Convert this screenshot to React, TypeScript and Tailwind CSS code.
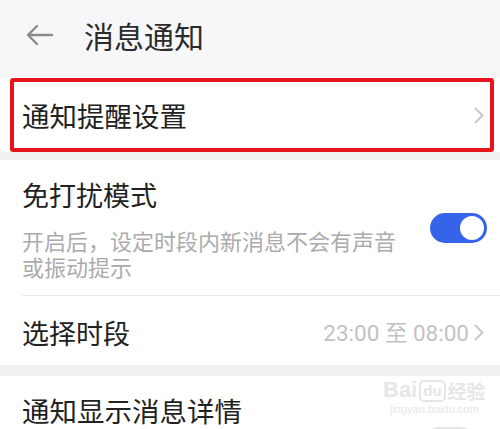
import React from 'react';

const font = { fontFamily: '"Noto Sans CJK SC", "Noto Sans", sans-serif' };

const Chevron: React.FC<{ className?: string }> = ({ className }) => (
  <svg width="10" height="17" viewBox="0 0 10 17" className={className}>
    <path d="M1.5 1.5 L8.5 8.5 L1.5 15.5" fill="none" stroke="#c6c6c8" strokeWidth="1.8" strokeLinecap="round" strokeLinejoin="round" />
  </svg>
);

const Toggle: React.FC<{ on: boolean }> = ({ on }) =>
  on ? (
    <div className="w-[57px] h-[30px] rounded-full bg-[#3563ea] flex items-center justify-end pr-[1px]">
      <div className="w-[28px] h-[28px] rounded-full bg-white border-[2px] border-[#3563ea]" />
    </div>
  ) : (
    <div className="w-[50px] h-[28px] rounded-full bg-[#e4e4e6] flex items-center pl-[2px]">
      <div className="w-[24px] h-[24px] rounded-full bg-white" />
    </div>
  );

export default function App() {
  return (
    <div className="relative w-[500px] h-[429px] overflow-hidden bg-[#f1f1f3]" style={font}>
      {/* header */}
      <div className="h-[72px] bg-[#f7f7f9] flex items-center">
        <svg width="30" height="24" viewBox="0 0 30 24" className="ml-[25px] -mt-[2px]">
          <path d="M27 12 H3 M12 3 L3 12 L12 21" fill="none" stroke="#8a8a8c" strokeWidth="2.4" strokeLinecap="round" strokeLinejoin="round" />
        </svg>
        <span className="ml-[29px] -mt-[2px] text-[30px] leading-[36px] text-[#2b2b2b]">消息通知</span>
      </div>
      <div className="h-[6px] bg-[#f7f7f9]" />

      {/* highlighted row */}
      <div className="bg-white">
        <div className="ml-[10px] mr-[6px] h-[74px] border-[4px] border-[#e8141c] rounded-[3px] flex items-center justify-between pl-[8px] pr-[6px]">
          <span className="text-[27.5px] leading-[36px] text-[#222]">通知提醒设置</span>
          <Chevron />
        </div>
      </div>

      <div className="h-[8px]" />

      {/* do not disturb */}
      <div className="bg-white">
        <div className="flex items-center justify-between pl-[22px] pr-[13px] pt-[17px] pb-[16px]">
          <div>
            <div className="text-[27px] leading-[36px] text-[#222]">免打扰模式</div>
            <div className="mt-[14px] w-[380px] text-[22px] leading-[26px] text-[#ababad]">
              开启后，设定时段内新消息不会有声音或振动提示
            </div>
          </div>
          <Toggle on />
        </div>
        <div className="ml-[22px] h-px bg-[#ececee]" />
        <div className="h-[69px] flex items-center justify-between pl-[22px] pr-[16px]">
          <span className="mt-[4px] text-[27px] leading-[36px] text-[#222]">选择时段</span>
          <div className="mt-[4px] flex items-center gap-[5px]">
            <span className="text-[22.5px] leading-[30px] text-[#c2c2c4]" style={{ fontFamily: 'Roboto, "Noto Sans CJK SC", sans-serif' }}>
              23:00 至 08:00
            </span>
            <Chevron />
          </div>
        </div>
      </div>

      <div className="h-[11px]" />

      {/* show details */}
      <div className="bg-white h-[60px] flex justify-between pl-[22px] pr-[25px] pt-[16px]">
        <span className="text-[27.5px] leading-[36px] text-[#222]">通知显示消息详情</span>
        <div className="mt-[35px]">
          <Toggle on={false} />
        </div>
      </div>

      {/* watermark */}
      <div className="absolute left-[383px] top-[378px] flex flex-col items-center text-[#e6e6e8] pointer-events-none">
        <div className="flex items-end gap-[2px]">
          <span className="text-[22px] leading-[24px] font-bold" style={{ fontFamily: '"Liberation Sans", sans-serif' }}>Bai</span>
          <span className="text-[15px] leading-[18px] font-bold rounded-[5px] border-2 border-[#e6e6e8] px-[2px]" style={{ fontFamily: '"Liberation Sans", sans-serif' }}>du</span>
          <span className="text-[19px] leading-[22px] font-bold">经验</span>
        </div>
        <span className="text-[11px] leading-[14px]" style={{ fontFamily: '"Liberation Sans", sans-serif' }}>jingyan.baidu.com</span>
      </div>
    </div>
  );
}
